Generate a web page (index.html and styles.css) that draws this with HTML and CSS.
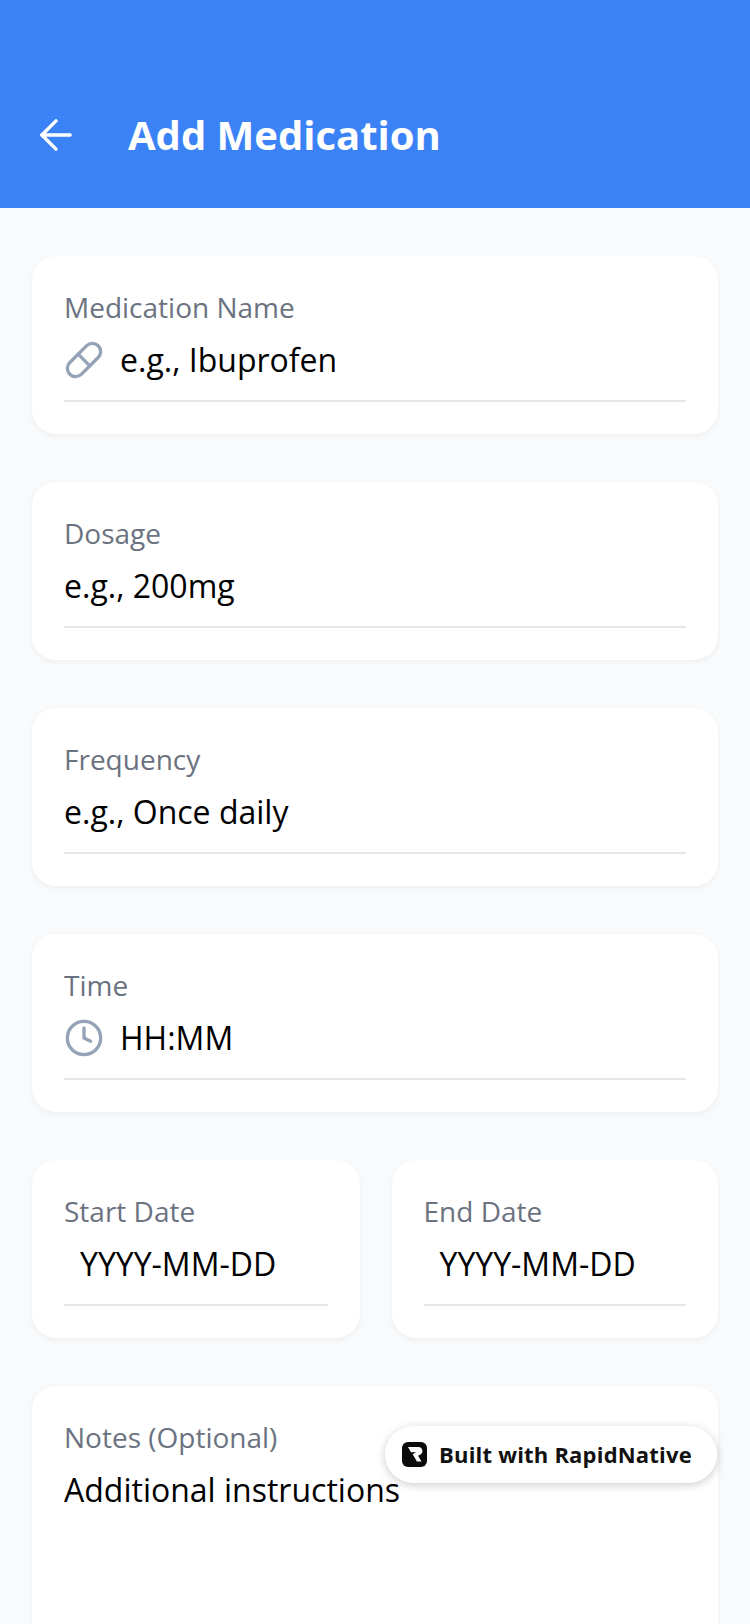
FILE: index.html
```html
<!DOCTYPE html>
<html lang="en">
<head>
    <meta charset="UTF-8">
    <meta name="viewport" content="width=device-width, initial-scale=1.0">
    <title>Add Medication</title>
    <link rel="stylesheet" href="styles.css">
</head>

<body>
    <header class="top-bar">
        <svg class="back-icon" viewBox="0 0 34 34" fill="none" stroke="#fff" stroke-width="3.6" stroke-linecap="round" stroke-linejoin="round">
            <path d="M32 17H2"/>
            <path d="M17 2 2 17l15 15"/>
        </svg>
        <h1>Add Medication</h1>
    </header>

    <main class="form">
        <section class="card">
            <label class="field-label">Medication Name</label>
            <div class="field-input">
                <svg class="field-icon" viewBox="0 0 24 24" fill="none" stroke="#94a3b8" stroke-width="2" stroke-linecap="round" stroke-linejoin="round">
                    <path d="m10.5 20.5 10-10a4.95 4.95 0 1 0-7-7l-10 10a4.95 4.95 0 1 0 7 7Z"/>
                    <path d="m8.5 8.5 7 7"/>
                </svg>
                <span>e.g., Ibuprofen</span>
            </div>
        </section>

        <section class="card">
            <label class="field-label">Dosage</label>
            <div class="field-input"><span>e.g., 200mg</span></div>
        </section>

        <section class="card">
            <label class="field-label">Frequency</label>
            <div class="field-input"><span>e.g., Once daily</span></div>
        </section>

        <section class="card">
            <label class="field-label">Time</label>
            <div class="field-input">
                <svg class="field-icon" viewBox="0 0 24 24" fill="none" stroke="#94a3b8" stroke-width="2" stroke-linecap="round" stroke-linejoin="round">
                    <circle cx="12" cy="12" r="10"/>
                    <path d="M12 6v6l4 2"/>
                </svg>
                <span>HH:MM</span>
            </div>
        </section>

        <div class="date-row">
            <section class="card">
                <label class="field-label">Start Date</label>
                <div class="field-input date-input"><span>YYYY-MM-DD</span></div>
            </section>
            <section class="card">
                <label class="field-label">End Date</label>
                <div class="field-input date-input"><span>YYYY-MM-DD</span></div>
            </section>
        </div>

        <section class="card notes-card">
            <label class="field-label">Notes (Optional)</label>
            <div class="notes-input">Additional instructions</div>
        </section>
    </main>

    <div class="built-badge">
        <svg class="badge-logo" viewBox="0 0 25 25">
            <rect width="25" height="25" rx="6" fill="#0b0b0b"/>
            <path d="M6 5h10.5a4 4 0 0 1 2 7.4l-2.4 1.3 3.4 5.8h-4.6l-4.2-7.2 3.4-2H9Z" fill="#fff"/>
        </svg>
        <span>Built with RapidNative</span>
    </div>
</body>
</html>
```

FILE: styles.css
```css
* {
    box-sizing: border-box;
}
html, body {
    margin: 0;
    padding: 0;
}
body {
    position: relative;
    width: 750px;
    height: 1624px;
    overflow: hidden;
    background-color: #f8fafc;
    font-family: "Open Sans", sans-serif;
}
.top-bar {
    display: flex;
    align-items: center;
    gap: 56px;
    height: 208px;
    padding: 62px 40px 0;
    background-color: #3b82f6;
    color: #fff;
}
.top-bar h1 {
    margin: 0;
    font-size: 40px;
    font-weight: 700;
    line-height: 56px;
}
.back-icon {
    width: 32px;
    height: 32px;
}
.form {
    display: flex;
    flex-direction: column;
    gap: 48px;
    padding: 48px 32px 0;
}
.card {
    height: 178px;
    padding: 32px 32px 0;
    background-color: #fff;
    border-radius: 24px;
    box-shadow: 0 2px 6px rgba(0, 0, 0, 0.05);
}
.field-label {
    display: block;
    font-size: 28px;
    line-height: 38px;
    color: #6b7280;
}
.field-input {
    display: flex;
    align-items: center;
    gap: 16px;
    height: 76px;
    padding-bottom: 8px;
    border-bottom: 2px solid #e5e7eb;
    font-size: 32px;
    color: #000;
}
.field-icon {
    width: 40px;
    height: 40px;
    margin-top: 2px;
}
.date-row {
    display: grid;
    grid-template-columns: 327.5px 326.5px;
    gap: 32px;
}
.date-input {
    padding-left: 16px;
}
/* card is cut off by the bottom of the screen */
.notes-card {
    height: 238px;
    border-radius: 24px 24px 0 0;
}
.notes-input {
    margin-top: 12px;
    font-size: 32px;
    line-height: 44px;
    color: #000;
}
.built-badge {
    position: absolute;
    left: 385px;
    top: 1426px;
    display: flex;
    align-items: center;
    gap: 12px;
    width: 332px;
    height: 57px;
    padding: 0 0 2px 17px;
    background-color: #fff;
    border-radius: 29px;
    box-shadow: 0 2px 10px rgba(0, 0, 0, 0.2);
    font-size: 22px;
    font-weight: 700;
    letter-spacing: 0.2px;
    color: #111;
}
.badge-logo {
    width: 25px;
    height: 25px;
    margin-top: 2px;
}
```
